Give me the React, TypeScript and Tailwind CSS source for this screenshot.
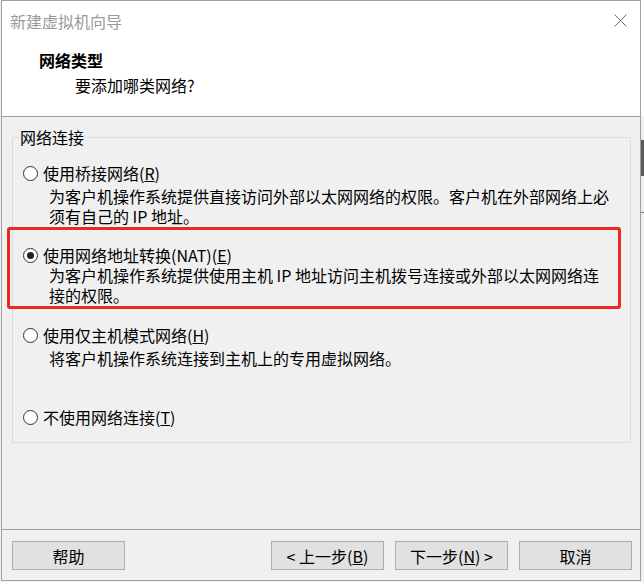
import React from "react";

const font = { fontFamily: '"Noto Sans CJK SC", "Noto Sans", sans-serif' };

function Radio({ checked, label, mnemonic, suffix }: { checked?: boolean; label: string; mnemonic: string; suffix?: string }) {
  return (
    <div className="flex items-center h-[20px] leading-[20px] pl-[10px]">
      <span className="w-[15px] h-[15px] rounded-full border border-[#333333] bg-white flex items-center justify-center shrink-0">
        {checked && <span className="w-[7px] h-[7px] rounded-full bg-[#222222]" />}
      </span>
      <span className="ml-[5px] whitespace-nowrap">
        {label}(<u>{mnemonic}</u>){suffix}
      </span>
    </div>
  );
}

function Btn({ children }: { children: React.ReactNode }) {
  return (
    <div className="w-[113px] h-[29px] bg-[#e1e1e1] border border-[#adadad] flex items-center justify-center text-[16px] leading-[20px] text-black whitespace-nowrap">
      {children}
    </div>
  );
}

export default function App() {
  return (
    <div className="relative w-[644px] h-[582px] bg-[#f0f0f0] flex text-black text-[16px]" style={font}>
      <div className="w-[1px] bg-[#f0f0f0]" />
      <div className="w-[640px] h-[581px] border border-[#a0a0a0] flex flex-col bg-[#f0f0f0]">
        {/* header */}
        <div className="h-[116px] bg-white border-b border-[#a0a0a0] flex flex-col">
          <div className="h-[39px] flex items-center justify-between pl-[8px] pr-[13px]">
            <span className="text-[#9a9a9a] leading-[20px]">新建虚拟机向导</span>
            <svg width="13" height="13" viewBox="0 0 13 13">
              <path d="M0.5 0.5 L12.5 12.5 M12.5 0.5 L0.5 12.5" stroke="#6a6a6a" strokeWidth="1" fill="none" />
            </svg>
          </div>
          <div className="mt-[10px] pl-[37px] font-bold leading-[20px]">网络类型</div>
          <div className="mt-[5px] pl-[73px] leading-[20px]">要添加哪类网络?</div>
        </div>
        {/* body */}
        <div className="flex-1 flex flex-col">
          <div className="relative mt-[20px] ml-[10px] w-[619px] h-[306px] border border-[#dcdcdc] pt-[25px]">
            <span className="absolute left-[6px] top-[-11px] px-[1px] bg-[#f0f0f0] leading-[20px]">网络连接</span>
            <Radio label="使用桥接网络" mnemonic="R" />
            <div className="mt-[3px] pl-[36px] leading-[20px] whitespace-nowrap">
              为客户机操作系统提供直接访问外部以太网网络的权限。客户机在外部网络上必
              <br />
              须有自己的 IP 地址。
            </div>
            <div className="mt-[19px]">
              <Radio checked label="使用网络地址转换(NAT)" mnemonic="E" />
            </div>
            <div className="pl-[36px] leading-[20px] whitespace-nowrap">
              为客户机操作系统提供使用主机 IP 地址访问主机拨号连接或外部以太网网络连
              <br />
              接的权限。
            </div>
            <div className="mt-[20px]">
              <Radio label="使用仅主机模式网络" mnemonic="H" />
            </div>
            <div className="mt-[3px] pl-[36px] leading-[20px] whitespace-nowrap">
              将客户机操作系统连接到主机上的专用虚拟网络。
            </div>
            <div className="mt-[39px]">
              <Radio label="不使用网络连接" mnemonic="T" />
            </div>
          </div>
          <div className="mt-[86px] border-t border-[#a0a0a0]" />
          <div className="pt-[11px] pl-[10px] pr-[8px] flex justify-between">
            <Btn>帮助</Btn>
            <div className="flex gap-[11px]">
              <Btn>
                &lt; 上一步(<u>B</u>)
              </Btn>
              <Btn>
                下一步(<u>N</u>) &gt;
              </Btn>
              <Btn>取消</Btn>
            </div>
          </div>
        </div>
      </div>
      <div className="w-[3px] flex flex-col">
        <div className="h-[116px] bg-white" />
        <div className="h-[24px]" />
        <div className="h-[36px] bg-[#5a5a5a]" />
        <div className="h-[36px]" />
        <div className="h-[1px] bg-[#777777]" />
        <div className="flex-1" />
      </div>
      {/* annotation highlight */}
      <div className="absolute left-[7px] top-[227px] w-[614px] h-[82px] border-[3px] border-[#ea2a22] rounded-[3px] pointer-events-none" />
    </div>
  );
}
